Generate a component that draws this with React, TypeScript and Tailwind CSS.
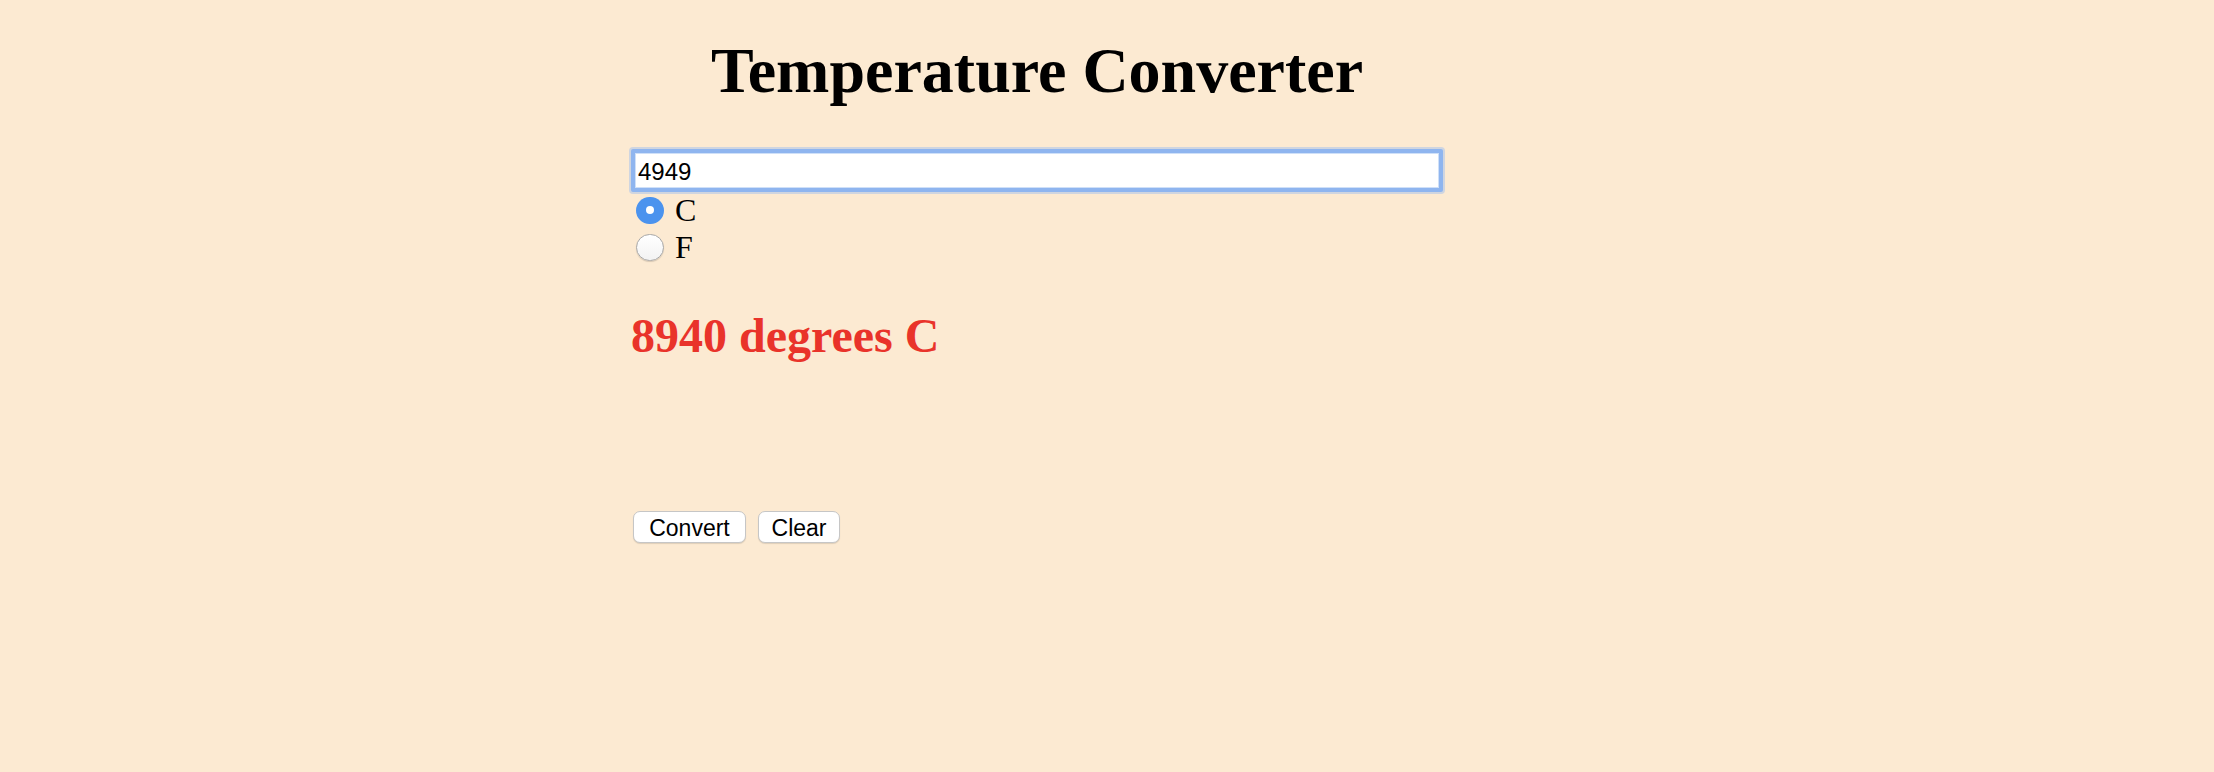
export default function App() {
    return (
        <div className="min-h-screen w-full bg-[#fcead2] font-['Liberation_Serif','Times_New_Roman',serif] text-black">
            <div className="ml-[631px] w-[812px] pt-[34px]">
                <h1 className="text-center text-[64px] font-bold leading-[1.15]">
                    Temperature Converter
                </h1>

                <input
                    type="text"
                    defaultValue="4949"
                    className="mt-[41px] block h-[43px] w-full rounded-[2px] border-[4px] border-[#8fb5ef] bg-white pl-[3px] pt-[4px] font-['Liberation_Sans',Arial,sans-serif] text-[24px] leading-none text-black shadow-[0_0_0_2px_#cfd5e0,inset_0_0_0_1px_#cfe0f8] outline-none"
                />

                <label className="flex h-[37px] items-center">
                    <span className="ml-[5px] flex h-[27px] w-[28px] items-center justify-center rounded-full bg-[#4b93ee]">
                        <span className="h-[8px] w-[8px] rounded-full bg-white" />
                    </span>
                    <span className="ml-[11px] text-[32px] leading-[37px]">C</span>
                </label>
                <label className="flex h-[37px] items-center">
                    <span className="ml-[5px] h-[27px] w-[28px] rounded-full border border-[#a8a8a8] bg-gradient-to-b from-white to-[#f3f3f3] shadow-[0_1px_1px_rgba(0,0,0,0.15)]" />
                    <span className="ml-[11px] text-[32px] leading-[37px]">F</span>
                </label>

                <h2 className="mt-[42px] text-[48px] font-bold leading-[1.15] text-[#e9332a]">
                    8940 degrees C
                </h2>

                <div className="ml-[2px] mt-[148px] flex gap-[12px] font-['Liberation_Sans',Arial,sans-serif]">
                    <button className="h-[32px] w-[113px] rounded-[7px] border border-[#c6c6c6] bg-white pt-[3px] text-[23px] leading-none text-black shadow-[0_1px_1px_rgba(0,0,0,0.12)]">
                        Convert
                    </button>
                    <button className="h-[32px] w-[82px] rounded-[7px] border border-[#c6c6c6] bg-white pt-[3px] text-[23px] leading-none text-black shadow-[0_1px_1px_rgba(0,0,0,0.12)]">
                        Clear
                    </button>
                </div>
            </div>
        </div>
    );
}
